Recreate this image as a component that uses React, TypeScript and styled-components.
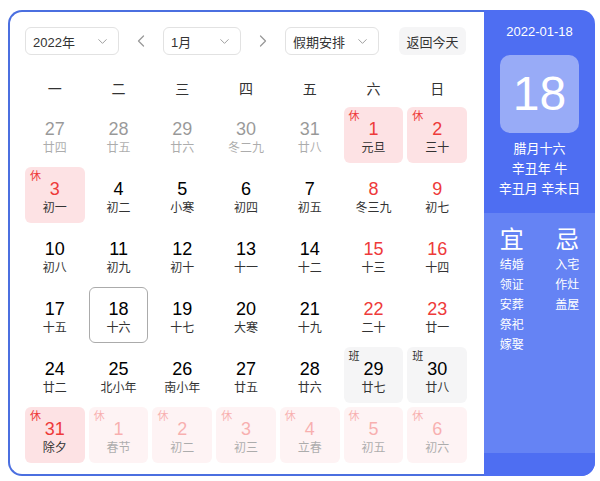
import React from 'react';
import styled, { createGlobalStyle } from 'styled-components';
import { ChevronDown, ChevronLeft, ChevronRight } from 'lucide-react';

const GlobalStyle = createGlobalStyle`
  html, body {
    margin: 0;
    padding: 0;
    background: #ffffff;
  }
  body {
    padding: 10px 5px 0 8px;
    font-family: "Liberation Sans", "Noto Sans CJK SC", sans-serif;
  }
`

const Wrapper = styled.div`
  display: flex;
  width: 587px;
  height: 466px;
`

const Main = styled.div`
  width: 476px;
  box-sizing: border-box;
  border: 2px solid #4b6fe0;
  border-right: none;
  border-radius: 14px 0 0 14px;
  padding: 15px 17px 11px 15px;
  display: flex;
  flex-direction: column;
`

const Toolbar = styled.div`
  display: flex;
  align-items: center;
  height: 28px;
  margin-bottom: 18px;
`

const Select = styled.div<{ w: number }>`
  width: ${({ w }) => w}px;
  height: 28px;
  box-sizing: border-box;
  border: 1px solid #e2e2e2;
  border-radius: 6px;
  display: flex;
  align-items: center;
  justify-content: space-between;
  padding: 0 8px 0 7px;
  font-size: 13px;
  color: #333;
`

const Arrow = styled.div`
  width: 44px;
  display: flex;
  align-items: center;
  justify-content: center;
  color: #999;
`

const TodayButton = styled.div`
  margin-left: 20px;
  width: 67px;
  height: 28px;
  border-radius: 6px;
  background: #f5f5f6;
  display: flex;
  align-items: center;
  justify-content: center;
  font-size: 13px;
  color: #333;
`

const WeekHeader = styled.div`
  display: grid;
  grid-template-columns: repeat(7, 1fr);
  column-gap: 4px;
  height: 30px;
  margin-bottom: 4px;
  align-items: center;
  text-align: center;
  font-size: 14px;
  color: #333;
`

const Grid = styled.div`
  display: grid;
  grid-template-columns: repeat(7, 1fr);
  grid-auto-rows: 56px;
  gap: 4px;
`

type Kind = 'normal' | 'rest' | 'work';

const Cell = styled.div<{ kind: Kind; faded: boolean; today: boolean }>`
  position: relative;
  box-sizing: border-box;
  border-radius: 6px;
  padding-top: 11px;
  display: flex;
  flex-direction: column;
  align-items: center;
  opacity: ${({ faded }) => (faded ? 0.4 : 1)};
  background: ${({ kind }) =>
    kind === 'rest' ? '#fde2e4' : kind === 'work' ? '#f5f5f6' : 'transparent'};
  border: ${({ today }) => (today ? '1px solid #ababab' : 'none')};
  padding-top: ${({ today }) => (today ? '10px' : '11px')};
`

const DayNum = styled.div<{ red: boolean }>`
  font-size: 18px;
  line-height: 22px;
  color: ${({ red }) => (red ? '#ee3a3a' : '#000')};
`

const Lunar = styled.div`
  font-size: 12px;
  line-height: 16px;
  color: #333;
`

const Badge = styled.span<{ kind: Kind }>`
  position: absolute;
  top: 2px;
  left: 5px;
  font-size: 11px;
  line-height: 14px;
  color: ${({ kind }) => (kind === 'rest' ? '#ee3a3a' : '#333')};
`

const Side = styled.div`
  width: 111px;
  border-radius: 0 14px 14px 0;
  overflow: hidden;
  display: flex;
  flex-direction: column;
  background: #4e6ef2;
  color: #fff;
`

const SideTop = styled.div`
  display: flex;
  flex-direction: column;
  align-items: center;
  padding: 12px 0 14px;
`

const DateText = styled.div`
  font-size: 13px;
  line-height: 20px;
`

const BigDay = styled.div`
  margin-top: 13px;
  width: 79px;
  height: 78px;
  border-radius: 10px;
  background: rgba(255, 255, 255, 0.42);
  display: flex;
  align-items: center;
  justify-content: center;
  font-size: 48px;
  line-height: 1;
`

const LunarInfo = styled.div`
  margin-top: 6px;
  text-align: center;
  font-size: 13px;
  line-height: 20px;
`

const SideMid = styled.div`
  flex: 1;
  background: #6583f4;
  display: grid;
  grid-template-columns: 1fr 1fr;
  padding-top: 12px;
  align-items: start;
`

const AdviceCol = styled.div`
  display: flex;
  flex-direction: column;
  align-items: center;
`

const AdviceTitle = styled.div`
  font-size: 24px;
  line-height: 30px;
`

const AdviceItem = styled.div`
  font-size: 12px;
  line-height: 20px;
`

const SideBottom = styled.div`
  height: 23px;
  background: #4e6ef2;
`

type Day = {
  d: number;
  l: string;
  red?: boolean;
  kind?: Kind;
  faded?: boolean;
  today?: boolean;
};

const days: Day[] = [
  { d: 27, l: '廿四', faded: true },
  { d: 28, l: '廿五', faded: true },
  { d: 29, l: '廿六', faded: true },
  { d: 30, l: '冬二九', faded: true },
  { d: 31, l: '廿八', faded: true },
  { d: 1, l: '元旦', red: true, kind: 'rest' },
  { d: 2, l: '三十', red: true, kind: 'rest' },
  { d: 3, l: '初一', red: true, kind: 'rest' },
  { d: 4, l: '初二' },
  { d: 5, l: '小寒' },
  { d: 6, l: '初四' },
  { d: 7, l: '初五' },
  { d: 8, l: '冬三九', red: true },
  { d: 9, l: '初七', red: true },
  { d: 10, l: '初八' },
  { d: 11, l: '初九' },
  { d: 12, l: '初十' },
  { d: 13, l: '十一' },
  { d: 14, l: '十二' },
  { d: 15, l: '十三', red: true },
  { d: 16, l: '十四', red: true },
  { d: 17, l: '十五' },
  { d: 18, l: '十六', today: true },
  { d: 19, l: '十七' },
  { d: 20, l: '大寒' },
  { d: 21, l: '十九' },
  { d: 22, l: '二十', red: true },
  { d: 23, l: '廿一', red: true },
  { d: 24, l: '廿二' },
  { d: 25, l: '北小年' },
  { d: 26, l: '南小年' },
  { d: 27, l: '廿五' },
  { d: 28, l: '廿六' },
  { d: 29, l: '廿七', kind: 'work' },
  { d: 30, l: '廿八', kind: 'work' },
  { d: 31, l: '除夕', red: true, kind: 'rest' },
  { d: 1, l: '春节', red: true, kind: 'rest', faded: true },
  { d: 2, l: '初二', red: true, kind: 'rest', faded: true },
  { d: 3, l: '初三', red: true, kind: 'rest', faded: true },
  { d: 4, l: '立春', red: true, kind: 'rest', faded: true },
  { d: 5, l: '初五', red: true, kind: 'rest', faded: true },
  { d: 6, l: '初六', red: true, kind: 'rest', faded: true },
];

const weekNames = ['一', '二', '三', '四', '五', '六', '日'];
const good = ['结婚', '领证', '安葬', '祭祀', '嫁娶'];
const bad = ['入宅', '作灶', '盖屋'];

export default function App() {
  return (
    <>
      <GlobalStyle />
      <Wrapper>
        <Main>
          <Toolbar>
            <Select w={94}>
              <span>2022年</span>
              <ChevronDown size={15} color="#999" strokeWidth={1.5} />
            </Select>
            <Arrow><ChevronLeft size={20} strokeWidth={1.5} /></Arrow>
            <Select w={78}>
              <span>1月</span>
              <ChevronDown size={15} color="#999" strokeWidth={1.5} />
            </Select>
            <Arrow><ChevronRight size={20} strokeWidth={1.5} /></Arrow>
            <Select w={94}>
              <span>假期安排</span>
              <ChevronDown size={15} color="#999" strokeWidth={1.5} />
            </Select>
            <TodayButton>返回今天</TodayButton>
          </Toolbar>
          <WeekHeader>
            {weekNames.map((w) => <div key={w}>{w}</div>)}
          </WeekHeader>
          <Grid>
            {days.map((day, i) => {
              const kind = day.kind ?? 'normal';
              return (
                <Cell key={i} kind={kind} faded={!!day.faded} today={!!day.today}>
                  {kind !== 'normal' && (
                    <Badge kind={kind}>{kind === 'rest' ? '休' : '班'}</Badge>
                  )}
                  <DayNum red={!!day.red}>{day.d}</DayNum>
                  <Lunar>{day.l}</Lunar>
                </Cell>
              );
            })}
          </Grid>
        </Main>
        <Side>
          <SideTop>
            <DateText>2022-01-18</DateText>
            <BigDay>18</BigDay>
            <LunarInfo>
              腊月十六<br />辛丑年 牛<br />辛丑月 辛未日
            </LunarInfo>
          </SideTop>
          <SideMid>
            <AdviceCol>
              <AdviceTitle>宜</AdviceTitle>
              {good.map((g) => <AdviceItem key={g}>{g}</AdviceItem>)}
            </AdviceCol>
            <AdviceCol>
              <AdviceTitle>忌</AdviceTitle>
              {bad.map((b) => <AdviceItem key={b}>{b}</AdviceItem>)}
            </AdviceCol>
          </SideMid>
          <SideBottom />
        </Side>
      </Wrapper>
    </>
  );
}
